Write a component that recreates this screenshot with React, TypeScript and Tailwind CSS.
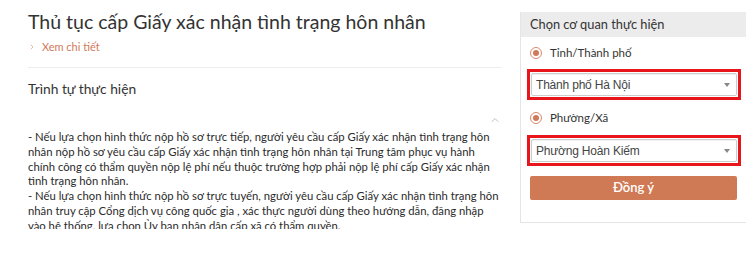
import { ChevronRight, ChevronUp } from "lucide-react";

const Radio = ({ label }: { label: string }) => (
  <label className="flex items-center gap-[8px] text-[11.5px] leading-[16px] text-[#333]">
    <span className="w-[12px] h-[12px] rounded-full border border-[#d9896b] flex items-center justify-center">
      <span className="w-[6px] h-[6px] rounded-full bg-[#d0795a]" />
    </span>
    {label}
  </label>
);

const Select = ({ value }: { value: string }) => (
  <div className="border-[3px] border-[#e8151b] p-[1px]">
    <div className="h-[23px] border border-[#ccc] rounded-[2px] bg-white flex items-center justify-between pl-[4px] pr-[6px] font-['Liberation_Sans',Arial,sans-serif] text-[12px] tracking-[-0.2px] text-[#444] shadow-[inset_0_1px_1px_rgba(0,0,0,0.06)]">
      <span>{value}</span>
      <span className="w-0 h-0 border-l-[3px] border-r-[3px] border-t-[4px] border-l-transparent border-r-transparent border-t-[#888]" />
    </div>
  </div>
);

const App = () => {
  return (
    <div className="w-[755px] h-[261px] bg-white flex font-['Lato','Open_Sans',sans-serif] text-[#333] overflow-hidden">
      <div className="w-[502px] shrink-0 pl-[28px] h-[229px] overflow-hidden">
        <h1 className="text-[19.5px] leading-[26px] mt-[9px] text-[#333]">
          Thủ tục cấp Giấy xác nhận tình trạng hôn nhân
        </h1>
        <a className="flex items-center gap-[6px] mt-[4px] text-[11px] leading-[16px] text-[#d0795a]">
          <ChevronRight size={8} strokeWidth={1.5} />
          Xem chi tiết
        </a>
        <div className="border-t border-[#eee] mt-[12px]" />
        <h2 className="text-[13.8px] mt-[11px] leading-[20px]">Trình tự thực hiện</h2>
        <div className="flex justify-end mt-[15px] pr-[1px] text-[#aaa]">
          <ChevronUp size={12} strokeWidth={1.5} />
        </div>
        <div className="mt-[4px] text-[11.3px] leading-[14.8px] text-[#2b2b2b]">
          <p>
            - Nếu lựa chọn hình thức nộp hồ sơ trực tiếp, người yêu cầu cấp Giấy xác nhận tình trạng hôn nhân nộp hồ sơ yêu cầu cấp Giấy xác nhận tình trạng hôn nhân tại Trung tâm phục vụ hành chính công có thẩm quyền nộp lệ phí nếu thuộc trường hợp phải nộp lệ phí cấp Giấy xác nhận tình trạng hôn nhân.
          </p>
          <p>
            - Nếu lựa chọn hình thức nộp hồ sơ trực tuyến, người yêu cầu cấp Giấy xác nhận tình trạng hôn nhân truy cập Cổng dịch vụ công quốc gia , xác thực người dùng theo hướng dẫn, đăng nhập vào hệ thống, lựa chọn Ủy ban nhân dân cấp xã có thẩm quyền.
          </p>
        </div>
      </div>
      <div className="ml-[18px] mt-[12px] w-[226px] h-[211px] shrink-0 border-l border-b border-[#e5e5e5]">
        <div className="h-[25px] bg-[#ececec] flex items-center pl-[9px] text-[12.8px]">
          Chọn cơ quan thực hiện
        </div>
        <div className="px-[6px] pt-[8px] flex flex-col">
          <div className="pl-[3px]">
            <Radio label="Tỉnh/Thành phố" />
          </div>
          <div className="mt-[8px] mr-[-1px]">
            <Select value="Thành phố Hà Nội" />
          </div>
          <div className="pl-[3px] mt-[10px]">
            <Radio label="Phường/Xã" />
          </div>
          <div className="mt-[9px] mr-[-1px]">
            <Select value="Phường Hoàn Kiếm" />
          </div>
          <button className="mt-[10px] mx-[3px] h-[24px] rounded-[2px] bg-[#d07a55] text-white text-[13px] font-semibold">
            Đồng ý
          </button>
        </div>
      </div>
    </div>
  );
};

export default App;
